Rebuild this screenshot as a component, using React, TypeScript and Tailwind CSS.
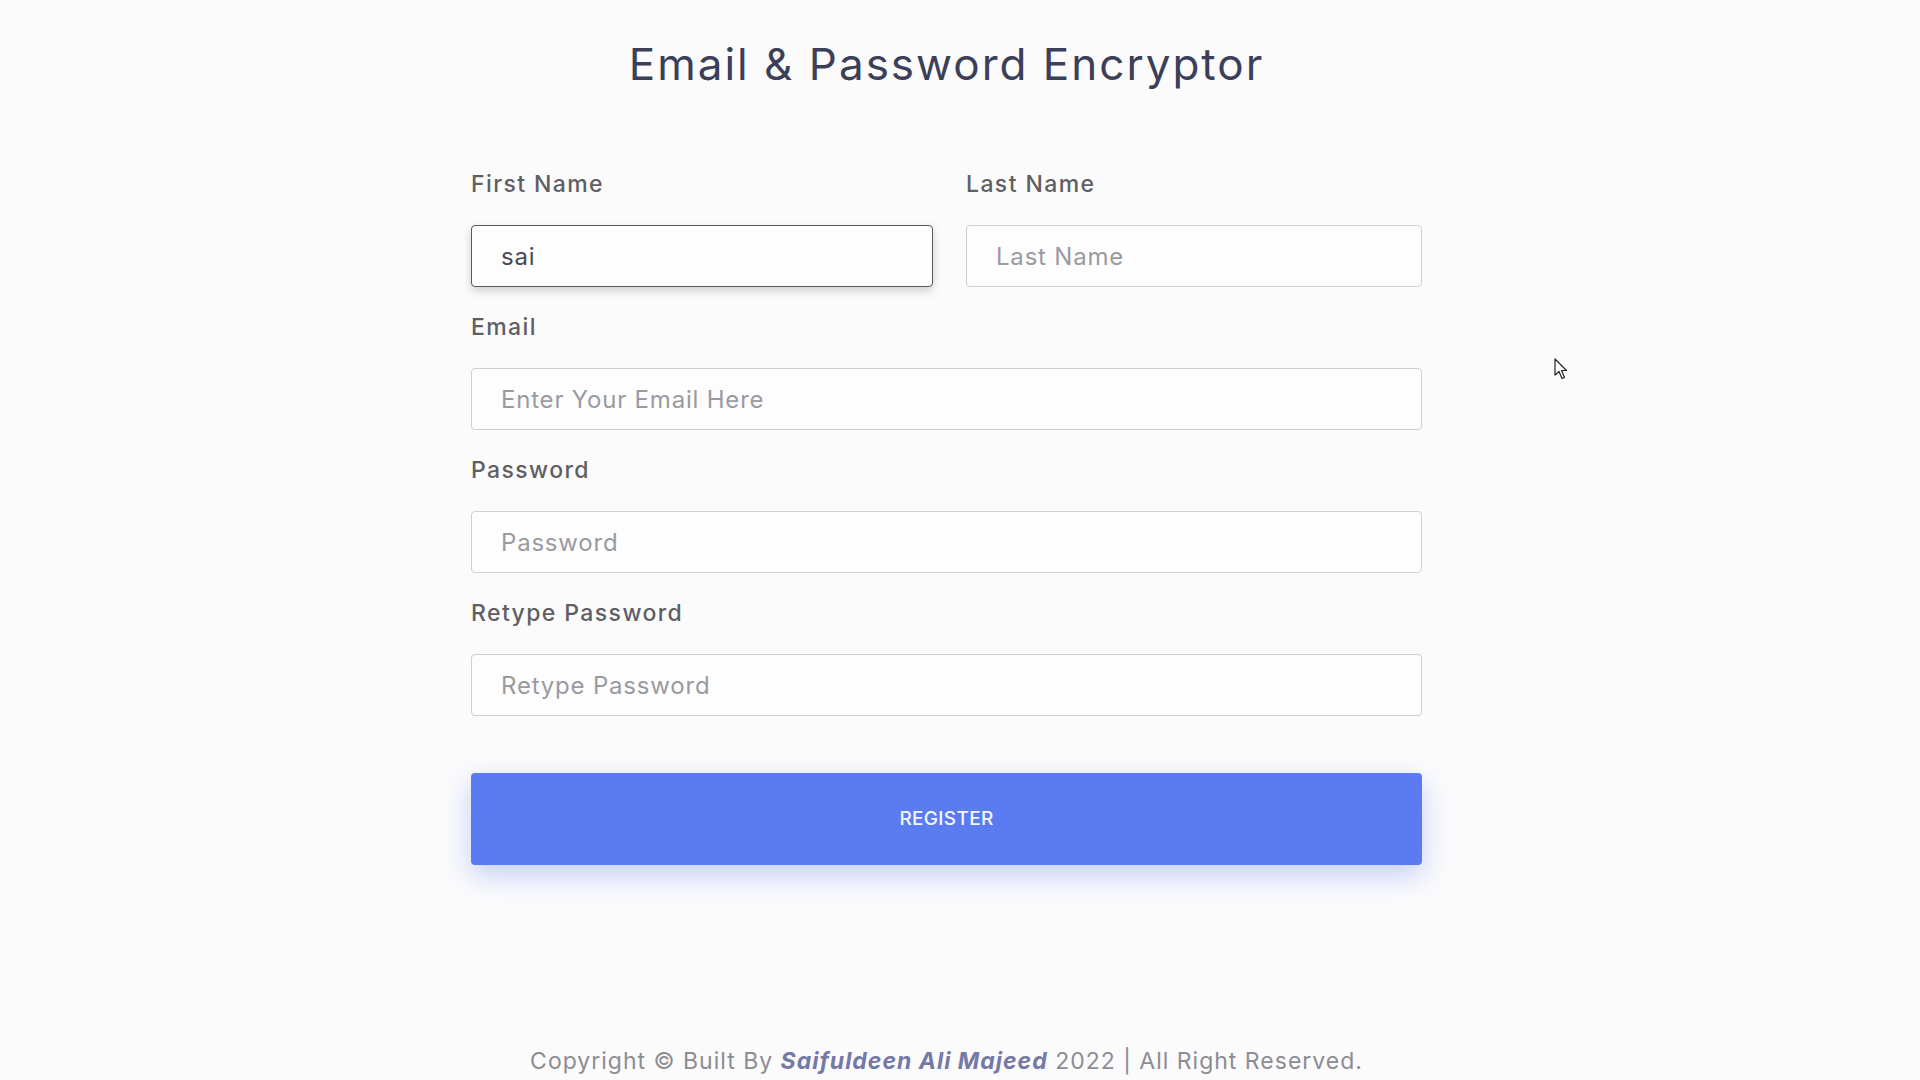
import { useState } from "react"

const font = { fontFamily: "Inter, 'Open Sans', sans-serif" }

function Field({
  label,
  placeholder,
  value,
  focused,
}: {
  label: string
  placeholder: string
  value?: string
  focused?: boolean
}) {
  const [v, setV] = useState(value ?? "")
  return (
    <div className="flex flex-col">
      <label className="mt-[25px] mb-[25px] h-[31px] text-[23px] leading-[31px] font-medium tracking-[1.4px] text-[#5f5f63]">
        {label}
      </label>
      <input
        value={v}
        onChange={(e) => setV(e.target.value)}
        placeholder={placeholder}
        className={`h-[62px] w-full rounded-[4px] bg-[#fdfdfe] px-[29px] text-[24px] tracking-[0.8px] text-[#4a4a55] outline-none placeholder:text-[#9a9aa0] ${
          focused
            ? "border-[1.5px] border-[#5a5a62] shadow-[0_4px_10px_rgba(0,0,0,0.18)]"
            : "border border-[#cfcfd4]"
        }`}
        style={font}
      />
    </div>
  )
}

export default function App() {
  return (
    <div className="relative min-h-[1080px] w-full bg-[#fbfbfc]" style={font}>
      <div className="flex flex-col items-center pr-[27px]">
        <h1 className="pt-[34px] h-[94px] text-[44px] leading-[60px] tracking-[2px] text-[#3b3f58]">
          Email &amp; Password Encryptor
        </h1>

        <form className="mt-[50px] w-[951px]" onSubmit={(e) => e.preventDefault()}>
          <div className="grid grid-cols-[462px_456px] gap-x-[33px]">
            <Field label="First Name" placeholder="First Name" value="sai" focused />
            <Field label="Last Name" placeholder="Last Name" />
          </div>
          <Field label="Email" placeholder="Enter Your Email Here" />
          <Field label="Password" placeholder="Password" />
          <Field label="Retype Password" placeholder="Retype Password" />

          <button
            type="submit"
            className="mt-[57px] h-[92px] w-full rounded-[4px] bg-[#5b7cf0] text-[19px] font-medium tracking-[0.3px] text-[#f4f6ff] shadow-[0_10px_28px_rgba(91,124,240,0.35)]"
          >
            REGISTER
          </button>
        </form>

        <footer className="mt-[181px] h-[31px] text-[23px] leading-[31px] tracking-[1px] text-[#8c8c92]">
          Copyright © Built By{" "}
          <span className="font-bold italic text-[#7479a6]">Saifuldeen Ali Majeed</span> 2022 | All
          Right Reserved.
        </footer>
      </div>

      {/* mouse pointer */}
      <svg
        className="absolute left-[1554px] top-[358px]"
        width="16"
        height="24"
        viewBox="0 0 16 24"
      >
        <path
          d="M1 1 L1 17 L5 13.5 L8 20.5 L10.5 19.5 L7.5 12.5 L12.5 12.5 Z"
          fill="#fff"
          stroke="#222"
          strokeWidth="1.2"
          strokeLinejoin="round"
        />
      </svg>
    </div>
  )
}
